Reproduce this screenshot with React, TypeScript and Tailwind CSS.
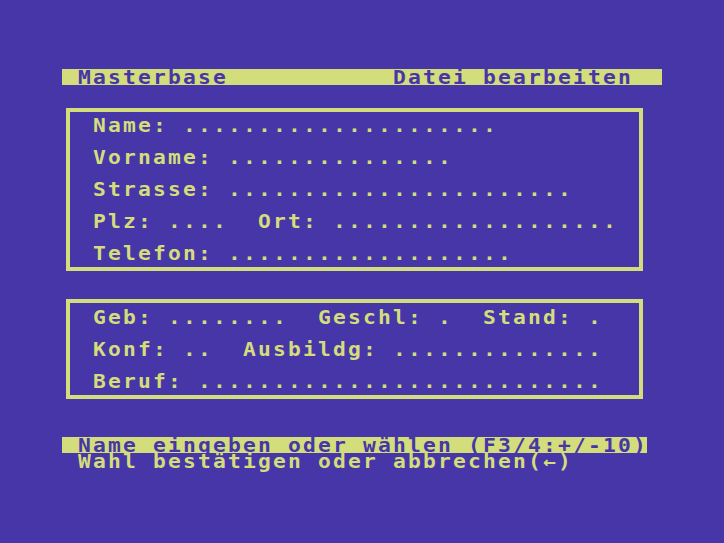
import clsx from "clsx"

// C64 text screen: 40 columns x 25 rows, each cell 15x16 px
const CELL = "flex w-[15px] shrink-0 justify-center whitespace-pre scale-x-[1.12]"

function Line({ text, inverse = false }: { text: string; inverse?: boolean }) {
  return (
    <div
      className={clsx(
        "flex h-4 w-fit leading-4",
        inverse && "bg-[#d4dd7b] text-[#4636a8]"
      )}
    >
      {Array.from(text).map((ch, i) => (
        <span key={i} className={CELL}>
          {ch}
        </span>
      ))}
    </div>
  )
}

function Box({ lines, className }: { lines: string[]; className?: string }) {
  return (
    <div
      className={clsx(
        "ml-1 flex w-[577px] flex-col gap-4 border-4 border-[#d4dd7b] pl-[22px]",
        className
      )}
    >
      {lines.map((l) => (
        <Line key={l} text={l} />
      ))}
    </div>
  )
}

const dots = (n: number) => ".".repeat(n)

export default function App() {
  const header = (" Masterbase".padEnd(22) + "Datei bearbeiten").padEnd(40)

  const person = [
    `Name: ${dots(21)}`,
    `Vorname: ${dots(15)}`,
    `Strasse: ${dots(23)}`,
    `Plz: ${dots(4)}  Ort: ${dots(19)}`,
    `Telefon: ${dots(19)}`,
  ]

  const details = [
    `Geb: ${dots(8)}  Geschl: .  Stand: .`,
    `Konf: ..  Ausbildg: ${dots(14)}`,
    `Beruf: ${dots(27)}`,
  ]

  return (
    <div className="h-[543px] w-[724px] overflow-hidden bg-[#4636a8] pl-[62px] pt-[69px] font-['DejaVu_Sans_Mono',monospace] text-[19px] font-bold text-[#d4dd7b]">
      <Line text={header} inverse />

      <Box lines={person} className="mt-[23px] pb-[6px] pt-[5px]" />
      <Box lines={details} className="mt-[28px] pb-[6px] pt-[6px]" />

      <div className="mt-[38px]">
        <Line text=" Name eingeben oder wählen (F3/4:+/-10)" inverse />
        <Line text=" Wahl bestätigen oder abbrechen(←)" />
      </div>
    </div>
  )
}
